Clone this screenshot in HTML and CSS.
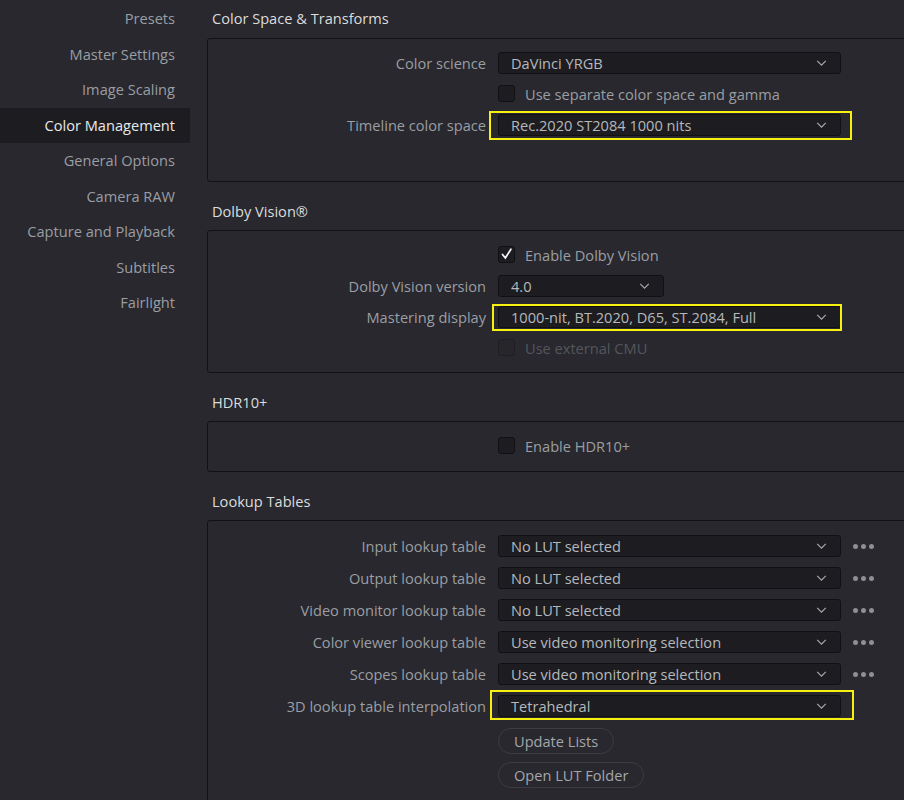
FILE: index.html
```html
<!DOCTYPE html>
<html lang="en">
	<head>
		<meta charset="UTF-8" />
		<meta name="viewport" content="width=device-width, initial-scale=1.0" />
		<title>Project Settings - Color Management</title>
		<link rel="stylesheet" href="styles.css">
	</head>
	<body>
		<div class="app">
			<nav class="sidebar">
				<a class="nav-item">Presets</a>
				<a class="nav-item">Master Settings</a>
				<a class="nav-item">Image Scaling</a>
				<a class="nav-item active">Color Management</a>
				<a class="nav-item">General Options</a>
				<a class="nav-item">Camera RAW</a>
				<a class="nav-item">Capture and Playback</a>
				<a class="nav-item">Subtitles</a>
				<a class="nav-item">Fairlight</a>
			</nav>

			<main class="settings">
				<h2 class="section-title first">Color Space &amp; Transforms</h2>
				<div class="panel panel-color">
					<div class="row">
						<span class="row-label">Color science</span>
						<div class="select">
							<span class="select-value">DaVinci YRGB</span>
							<svg class="chevron" viewBox="0 0 12 7"><path d="M1 1 L6 6 L11 1" /></svg>
						</div>
					</div>
					<div class="row">
						<span class="row-label"></span>
						<label class="check">
							<span class="box"></span>
							<span class="check-text">Use separate color space and gamma</span>
						</label>
					</div>
					<div class="row">
						<span class="row-label">Timeline color space</span>
						<div class="select">
							<span class="select-value">Rec.2020 ST2084 1000 nits</span>
							<svg class="chevron" viewBox="0 0 12 7"><path d="M1 1 L6 6 L11 1" /></svg>
							<span class="mark mark-timeline"></span>
						</div>
					</div>
				</div>

				<h2 class="section-title">Dolby Vision®</h2>
				<div class="panel panel-dolby">
					<div class="row">
						<span class="row-label"></span>
						<label class="check">
							<span class="box checked">
								<svg viewBox="0 0 17 17"><path d="M4 8.5 L7.2 12.5 L13.5 2.5" /></svg>
							</span>
							<span class="check-text">Enable Dolby Vision</span>
						</label>
					</div>
					<div class="row">
						<span class="row-label">Dolby Vision version</span>
						<div class="select short">
							<span class="select-value">4.0</span>
							<svg class="chevron" viewBox="0 0 12 7"><path d="M1 1 L6 6 L11 1" /></svg>
						</div>
					</div>
					<div class="row">
						<span class="row-label">Mastering display</span>
						<div class="select">
							<span class="select-value">1000-nit, BT.2020, D65, ST.2084, Full</span>
							<svg class="chevron" viewBox="0 0 12 7"><path d="M1 1 L6 6 L11 1" /></svg>
							<span class="mark mark-mastering"></span>
						</div>
					</div>
					<div class="row">
						<span class="row-label"></span>
						<label class="check disabled">
							<span class="box"></span>
							<span class="check-text">Use external CMU</span>
						</label>
					</div>
				</div>

				<h2 class="section-title">HDR10+</h2>
				<div class="panel panel-hdr">
					<div class="row">
						<span class="row-label"></span>
						<label class="check">
							<span class="box"></span>
							<span class="check-text">Enable HDR10+</span>
						</label>
					</div>
				</div>

				<h2 class="section-title">Lookup Tables</h2>
				<div class="panel panel-lut">
					<div class="row">
						<span class="row-label">Input lookup table</span>
						<div class="select">
							<span class="select-value">No LUT selected</span>
							<svg class="chevron" viewBox="0 0 12 7"><path d="M1 1 L6 6 L11 1" /></svg>
						</div>
						<span class="more"><i></i><i></i><i></i></span>
					</div>
					<div class="row">
						<span class="row-label">Output lookup table</span>
						<div class="select">
							<span class="select-value">No LUT selected</span>
							<svg class="chevron" viewBox="0 0 12 7"><path d="M1 1 L6 6 L11 1" /></svg>
						</div>
						<span class="more"><i></i><i></i><i></i></span>
					</div>
					<div class="row">
						<span class="row-label">Video monitor lookup table</span>
						<div class="select">
							<span class="select-value">No LUT selected</span>
							<svg class="chevron" viewBox="0 0 12 7"><path d="M1 1 L6 6 L11 1" /></svg>
						</div>
						<span class="more"><i></i><i></i><i></i></span>
					</div>
					<div class="row">
						<span class="row-label">Color viewer lookup table</span>
						<div class="select">
							<span class="select-value">Use video monitoring selection</span>
							<svg class="chevron" viewBox="0 0 12 7"><path d="M1 1 L6 6 L11 1" /></svg>
						</div>
						<span class="more"><i></i><i></i><i></i></span>
					</div>
					<div class="row">
						<span class="row-label">Scopes lookup table</span>
						<div class="select">
							<span class="select-value">Use video monitoring selection</span>
							<svg class="chevron" viewBox="0 0 12 7"><path d="M1 1 L6 6 L11 1" /></svg>
						</div>
						<span class="more"><i></i><i></i><i></i></span>
					</div>
					<div class="row">
						<span class="row-label">3D lookup table interpolation</span>
						<div class="select">
							<span class="select-value">Tetrahedral</span>
							<svg class="chevron" viewBox="0 0 12 7"><path d="M1 1 L6 6 L11 1" /></svg>
							<span class="mark mark-interp"></span>
						</div>
					</div>
					<div class="row button-row first-button">
						<span class="row-label"></span>
						<button class="pill">Update Lists</button>
					</div>
					<div class="row button-row">
						<span class="row-label"></span>
						<button class="pill">Open LUT Folder</button>
					</div>
				</div>
			</main>
		</div>
	</body>
</html>
```

FILE: styles.css
```css
html,
body {
	margin: 0;
	height: 100%;
	overflow: hidden;
}

body {
	font-family: "Open Sans", "Noto Sans", sans-serif;
	font-size: 14.6px;
	color: #9b9ea3;
	background-color: #28282e;
}

.app {
	display: flex;
	align-items: flex-start;
}

/* left navigation */
.sidebar {
	flex: 0 0 190px;
	padding-top: 1px;
}

.nav-item {
	display: block;
	height: 35.5px;
	line-height: 34.5px;
	padding-right: 15px;
	text-align: right;
	color: #9a9ea4;
}

.nav-item.active {
	color: #e8e8e8;
	background-color: #1d1d21;
}

/* settings column */
.settings {
	flex: 0 0 720px;
	margin-left: 17px;
}

.section-title {
	margin: 0;
	padding: 19px 0 9px 5px;
	font-size: 14.6px;
	font-weight: 400;
	line-height: 20px;
	color: #dcdcdc;
}

.section-title.first {
	padding-top: 8px;
	padding-bottom: 10px;
}

.panel {
	border: 1px solid #121215;
	border-radius: 3px;
	background-color: #28282e;
}

.panel-color {
	padding: 8px 0 41px;
}

.panel-dolby {
	padding: 8px 0 9px;
}

.panel-hdr {
	padding: 8px 0 10px;
}

.panel-lut {
	padding: 9px 0 20px;
}

.row {
	display: flex;
	align-items: center;
	height: 31px;
}

.panel-lut .row {
	height: 32px;
}

.panel-lut .button-row {
	height: 34px;
}

.panel-lut .first-button {
	margin-top: 2px;
}

.row-label {
	flex: 0 0 278px;
	padding-right: 12px;
	text-align: right;
	white-space: nowrap;
}

/* dropdowns */
.select {
	position: relative;
	display: flex;
	align-items: center;
	box-sizing: border-box;
	width: 343px;
	height: 22px;
	padding: 0 13px 0 12px;
	border: 1px solid #111113;
	border-radius: 3px;
	background-color: #1d1d21;
}

.select.short {
	width: 166px;
}

.select-value {
	flex: 1;
	color: #b6b8bb;
	white-space: nowrap;
}

.chevron {
	width: 11px;
	height: 6px;
	fill: none;
	stroke: #a6a8ab;
	stroke-width: 1.4;
}

.more {
	display: flex;
	gap: 3px;
	margin-left: 12px;
}

.more i {
	width: 5px;
	height: 5px;
	border-radius: 50%;
	background-color: #8d8f93;
}

/* yellow call-out frames drawn over the fields */
.mark {
	position: absolute;
	border: 2px solid #f5f010;
	pointer-events: none;
}

.mark-timeline {
	top: -4px;
	bottom: -5px;
	left: -10px;
	right: -12px;
}

.mark-mastering {
	top: -3px;
	bottom: -4px;
	left: -7px;
	right: -2px;
}

.mark-interp {
	top: -6px;
	bottom: -4px;
	left: -9px;
	right: -14px;
}

/* checkboxes */
.check {
	display: flex;
	align-items: center;
	gap: 10px;
}

.box {
	box-sizing: border-box;
	width: 17px;
	height: 17px;
	border: 1px solid #111113;
	border-radius: 3px;
	background-color: #1d1d21;
}

.box svg {
	display: block;
	width: 15px;
	height: 15px;
	fill: none;
	stroke: #f4f4f4;
	stroke-width: 2;
	stroke-linecap: round;
}

.check-text {
	color: #9b9ea3;
}

.check.disabled .box {
	border-color: #1f1f23;
	background-color: #26262b;
}

.check.disabled .check-text {
	color: #54565b;
}

/* pill buttons */
.pill {
	height: 26px;
	padding: 0 15px;
	border: 1px solid #3c3c42;
	border-radius: 13px;
	font-family: inherit;
	font-size: 14.6px;
	color: #a4a6aa;
	background-color: #28282e;
}
```
